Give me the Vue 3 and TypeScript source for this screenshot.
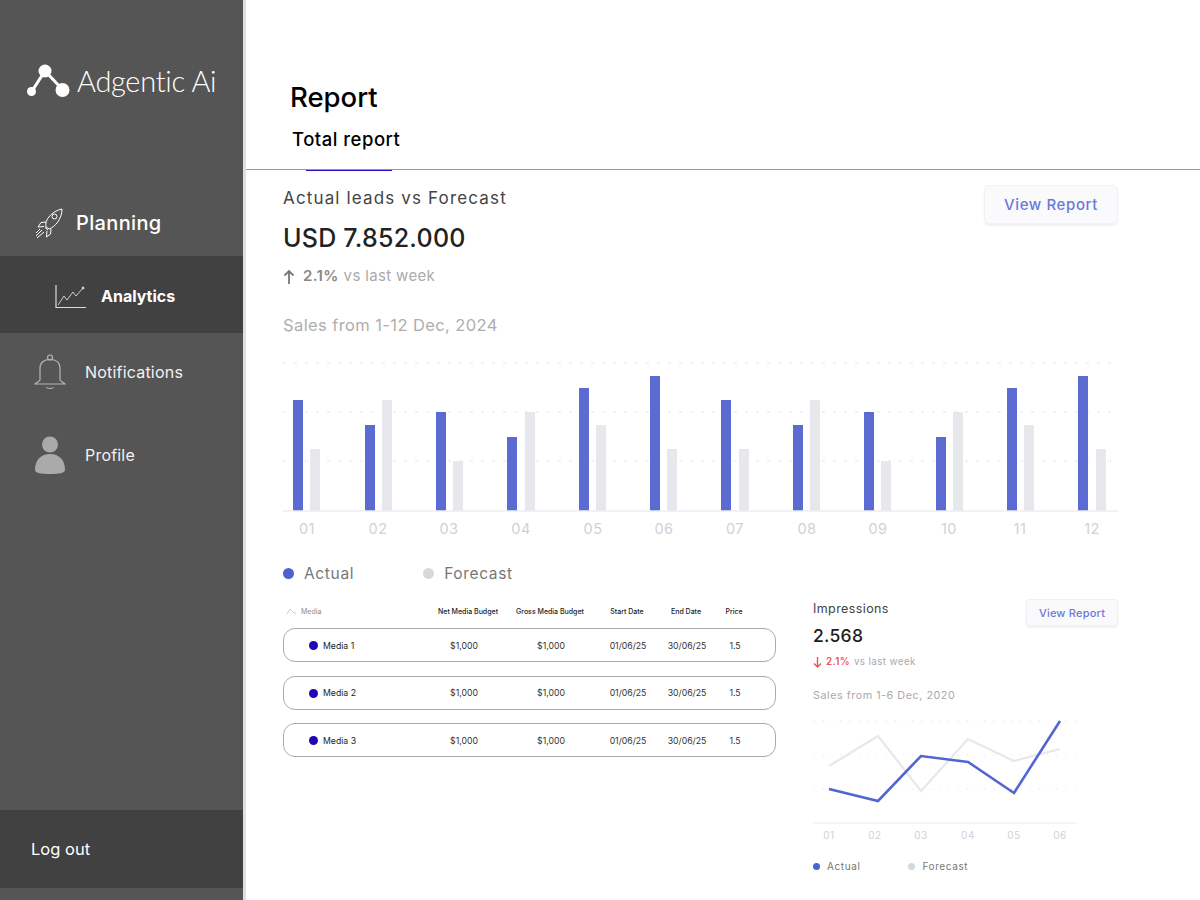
<script setup lang="ts">
const actualTops = [400, 425, 412, 437, 388, 376, 400, 425, 412, 437, 388, 376]
const forecastTops = [449, 400, 461, 412, 425, 449, 449, 400, 461, 412, 425, 449]
const actualX = [293, 365, 436, 507, 579, 650, 721, 793, 864, 936, 1007, 1078]
const forecastX = [310, 382, 453, 525, 596, 667, 739, 810, 881, 953, 1024, 1096]
const labelX = [307, 378, 449, 521, 593, 664, 735, 807, 878, 949, 1020, 1092]
const pad = (n: number) => String(n).padStart(2, '0')

const bars = actualTops.map((top, i) => ({
  label: pad(i + 1),
  ax: actualX[i] - 283,
  ay: top - 355,
  ah: 511 - top,
  fx: forecastX[i] - 283,
  fy: forecastTops[i] - 355,
  fh: 511 - forecastTops[i],
  lx: labelX[i] - 283
}))

const lineX = [16, 62, 108, 155, 201, 247]
const actualLine = '16,74 65,86 108,41 155,47 201,78 247,6'
const forecastLine = '16,51 65,21 108,76 155,24 201,46 247,34'
const rows = ['Media 1', 'Media 2', 'Media 3']
</script>

<template>
  <div class="page">
    <aside class="sidebar">
      <div class="brand">
        <svg class="logo" width="46" height="40" viewBox="0 0 46 40">
          <path d="M8 29 21 9 38 27" fill="none" stroke="#fff" stroke-width="3" />
          <circle cx="21" cy="9" r="6.500" fill="#fff" />
          <circle cx="38.500" cy="28" r="7" fill="#fff" />
          <circle cx="7.500" cy="29.500" r="4.500" fill="#fff" />
        </svg>
        <span class="brand-name">Adgentic Ai</span>
      </div>

      <nav class="nav">
        <a class="nav-item planning">
          <svg class="icon" width="30" height="32" viewBox="0 0 30 32" fill="none" stroke="#fff" stroke-width="1">
            <path d="M12 20C10 13 18 4 28 2c0 10-7 18-13 20z" />
            <circle cx="20.500" cy="9.500" r="2.500" />
            <path d="M12 15 7 15.500 4 20l6-.5M17 22l-.5 5-4 3 .5-6" />
            <path d="M11 20.500 14 23M8 23l-6 6M10 25l-7 6M6 22l-4 4" />
          </svg>
          <span>Planning</span>
        </a>
        <a class="nav-item analytics">
          <svg class="icon" width="32" height="24" viewBox="0 0 32 24" fill="none" stroke="#ddd">
            <path d="M1 0V22.500H31" stroke-width="1.200" />
            <path d="M3 20 9 11 12 15 18 7 21 11 28 3" stroke-width="0.900" />
            <circle cx="28" cy="3" r="1" fill="#ddd" />
          </svg>
          <span class="analytics-label">Analytics</span>
        </a>
        <a class="nav-item notifications">
          <svg class="icon" width="32" height="36" viewBox="0 0 32 36" fill="none" stroke="#b5b5b5" stroke-width="1.200">
            <circle cx="16" cy="3.500" r="2.500" />
            <path d="M6 26V14C6 8.500 10 5.500 16 5.500S26 8.500 26 14V26C26 27 29 28 31 30H1C3 28 6 27 6 26Z" />
            <path d="M12.500 33.500Q16 35.500 19.500 33.500" />
          </svg>
          <span>Notifications</span>
        </a>
        <a class="nav-item profile">
          <svg class="icon" width="32" height="38" viewBox="0 0 32 38">
            <circle cx="16" cy="8.500" r="8" fill="#aaa" />
            <path d="M1 34C1 24 7 18 16 18S31 24 31 34C31 37 25 38 16 38S1 37 1 34Z" fill="#aaa" />
          </svg>
          <span>Profile</span>
        </a>
      </nav>

      <a class="logout">Log out</a>
    </aside>

    <main class="main">
      <header class="head">
        <h1 class="title">Report</h1>
        <div class="tab">Total report</div>
        <span class="tab-line"></span>
      </header>

      <div class="content">
        <section class="summary">
          <div class="summary-text">
            <h2 class="card-title">Actual leads vs Forecast</h2>
            <div class="amount">USD 7.852.000</div>
            <div class="trend">
              <svg width="12" height="15" viewBox="0 0 12 15" fill="none" stroke="#777" stroke-width="1.800">
                <path d="M6 15V2M1.500 6.500 6 2l4.500 4.500" />
              </svg>
              <b>2.1%</b> vs last week
            </div>
            <div class="range">Sales from 1-12 Dec, 2024</div>
          </div>
          <button class="report-btn" type="button">View Report</button>
        </section>

        <svg class="bar-chart" width="835" height="190" viewBox="0 0 835 190">
          <path
            d="M0 8H835M0 57H835M0 106H835"
            stroke="#eceef2"
            stroke-width="1.500"
            stroke-dasharray="3 8"
          />
          <g v-for="b in bars" :key="b.label">
            <rect :x="b.ax" :y="b.ay" width="10" :height="b.ah" fill="#5c6bd1" />
            <rect :x="b.fx" :y="b.fy" width="10" :height="b.fh" fill="#e7e8ec" />
            <text :x="b.lx" y="179" text-anchor="middle" class="tick">{{ b.label }}</text>
          </g>
          <path d="M0 156H835" stroke="#eceef2" stroke-width="1.500" />
        </svg>

        <div class="legend big">
          <span class="legend-item"><i class="dot blue"></i>Actual</span>
          <span class="legend-item"><i class="dot grey"></i>Forecast</span>
        </div>

        <section class="lower">
          <div class="table">
            <div class="grid thead">
              <span class="media-head">
                <svg width="11" height="8" viewBox="0 0 11 8" fill="none" stroke="#ccc">
                  <path d="M1 7 4 2 8 6 10 6" />
                </svg>
                Media
              </span>
              <span>Net Media Budget</span>
              <span>Gross Media Budget</span>
              <span>Start Date</span>
              <span>End Date</span>
              <span>Price</span>
            </div>
            <div v-for="row in rows" :key="row" class="grid row">
              <span class="media-cell"><i class="media-dot"></i>{{ row }}</span>
              <span class="shift">$1,000</span>
              <span>$1,000</span>
              <span>01/06/25</span>
              <span>30/06/25</span>
              <span>1.5</span>
            </div>
          </div>

          <div class="side">
            <div class="side-top">
              <div>
                <h3 class="side-title">Impressions</h3>
                <div class="side-amount">2.568</div>
                <div class="side-trend">
                  <svg width="9" height="11" viewBox="0 0 9 11" fill="none" stroke="#f0525c" stroke-width="1.400">
                    <path d="M4.500 0V10M1 6.500 4.500 10 8 6.500" />
                  </svg>
                  <b>2.1%</b> vs last week
                </div>
              </div>
              <button class="report-btn small" type="button">View Report</button>
            </div>
            <div class="side-range">Sales from 1-6 Dec, 2020</div>
            <svg class="line-chart" width="263" height="130" viewBox="0 0 263 130">
              <path d="M0 6H263M0 40H263M0 74H263" stroke="#eceef2" stroke-width="1" stroke-dasharray="2 7" />
              <path d="M0 108H263" stroke="#e8e9ee" stroke-width="1" />
              <polyline :points="forecastLine" fill="none" stroke="#e7e8ec" stroke-width="2.200" />
              <polyline :points="actualLine" fill="none" stroke="#5166d0" stroke-width="2.600" />
              <text v-for="(x, i) in lineX" :key="x" :x="x" y="124" text-anchor="middle" class="tick small-tick">{{ pad(i + 1) }}</text>
            </svg>
            <div class="legend little">
              <span class="legend-item"><i class="dot blue"></i>Actual</span>
              <span class="legend-item"><i class="dot grey"></i>Forecast</span>
            </div>
          </div>
        </section>
      </div>
    </main>
  </div>
</template>

<style>
html,
body {
  margin: 0;
  background: #fff;
}
</style>

<style scoped>
.page {
  display: flex;
  width: 1200px;
  height: 900px;
  overflow: hidden;
  font-family: Inter, "Noto Sans", sans-serif;
  color: #111;
  background: #fff;
}

.sidebar {
  box-sizing: content-box;
  flex: 0 0 243px;
  display: flex;
  flex-direction: column;
  background: #555;
  border-right: 3px solid #dfe0e3;
  color: #fff;
}

.brand {
  display: flex;
  align-items: center;
  height: 190px;
  padding: 0 0 30px 24px;
  box-sizing: border-box;
  gap: 7px;
}

.logo {
  margin-top: 3px;
}

.brand-name {
  font-family: Lato, sans-serif;
  font-weight: 300;
  font-size: 29px;
  letter-spacing: -0.3px;
  white-space: nowrap;
}

.nav {
  display: flex;
  flex-direction: column;
}

.nav-item {
  display: flex;
  align-items: center;
}

.planning {
  height: 66px;
  padding-left: 34px;
  gap: 12px;
  font-size: 20px;
  font-weight: 500;
  letter-spacing: 0.35px;
}

.analytics {
  box-sizing: border-box;
  height: 77px;
  padding: 4px 0 0 55px;
  gap: 14px;
  background: #414141;
  font-size: 16px;
  font-weight: 700;
}

.analytics-label {
  margin-bottom: 2px;
}

.notifications,
.profile {
  padding-left: 34px;
  gap: 19px;
  font-size: 16px;
  letter-spacing: 0.2px;
  color: #f2f2f2;
}

.notifications {
  height: 78px;
}

.profile {
  height: 87px;
}

.logout {
  display: flex;
  align-items: center;
  margin-top: auto;
  margin-bottom: 12px;
  height: 78px;
  padding-left: 31px;
  background: #414141;
  font-size: 16.500px;
}

.main {
  flex: 1;
  min-width: 0;
}

.head {
  position: relative;
  box-sizing: border-box;
  height: 170px;
  padding: 80px 0 0 44px;
  border-bottom: 1px solid #999;
}

.title {
  margin: 0;
  font-size: 27.500px;
  line-height: 34px;
  font-weight: 500;
  color: #000;
}

.tab {
  margin: 13px 0 0 2px;
  font-size: 18.500px;
  line-height: 24px;
  font-weight: 500;
  letter-spacing: 0.5px;
  color: #000;
}

.tab-line {
  position: absolute;
  left: 60px;
  bottom: -2px;
  width: 86px;
  height: 1.500px;
  background: #2410c8;
}

.content {
  padding: 0 82px 0 37px;
}

.summary {
  display: flex;
  justify-content: space-between;
  align-items: flex-start;
}

.summary-text {
  padding-top: 17px;
}

.card-title {
  margin: 0;
  font-size: 17px;
  line-height: 22px;
  font-weight: 400;
  letter-spacing: 1.15px;
  color: #444;
}

.amount {
  margin-top: 13px;
  font-size: 25px;
  line-height: 32px;
  font-weight: 500;
  letter-spacing: 0.25px;
  color: #222;
}

.trend {
  display: flex;
  align-items: center;
  gap: 5px;
  margin-top: 12px;
  font-size: 15px;
  line-height: 20px;
  letter-spacing: 0.35px;
  color: #aaa;
}

.trend b {
  margin-left: 3px;
  font-weight: 600;
  color: #888;
}

.range {
  margin-top: 28px;
  font-size: 16.500px;
  line-height: 22px;
  letter-spacing: 0.4px;
  color: #aeaeae;
}

.report-btn {
  margin-top: 15px;
  width: 134px;
  height: 39px;
  border: 1px solid #f0f1f4;
  border-radius: 5px;
  background: #fafafc;
  box-shadow: 0 2px 2px #f1f2f5;
  font-family: inherit;
  font-size: 15px;
  font-weight: 500;
  letter-spacing: 0.6px;
  color: #6a79d8;
}

.report-btn.small {
  margin-top: 0;
  width: 92px;
  height: 27px;
  font-size: 11px;
  letter-spacing: 0.2px;
  border-radius: 3px;
}

.bar-chart {
  display: block;
  margin-top: 19px;
}

.tick {
  font-size: 14.500px;
  letter-spacing: 0.5px;
  fill: #cfd1d8;
}

.small-tick {
  font-size: 10px;
}

.legend {
  display: flex;
  align-items: center;
}

.legend-item {
  display: flex;
  align-items: center;
}

.dot {
  display: block;
  border-radius: 50%;
}

.blue {
  background: #4f60cf;
}

.grey {
  background: #d7d8dd;
}

.big {
  margin-top: 18px;
  height: 20px;
  gap: 69px;
  font-size: 15.500px;
  letter-spacing: 0.65px;
  color: #777;
}

.big .dot {
  width: 11px;
  height: 11px;
  margin-right: 10px;
}

.lower {
  display: flex;
  justify-content: space-between;
  margin-top: 16px;
}

.table {
  width: 493px;
}

.grid {
  display: grid;
  grid-template-columns: 145px 80px 84px 70px 48px 48px;
  align-items: center;
  text-align: center;
  white-space: nowrap;
}

.thead {
  height: 29px;
  padding-bottom: 5px;
  box-sizing: border-box;
  font-size: 7px;
  font-weight: 500;
  color: #222;
}

.media-head {
  display: flex;
  align-items: center;
  gap: 4px;
  padding-left: 3px;
  color: #8c8c8c;
  font-weight: 400;
}

.row {
  box-sizing: border-box;
  height: 34px;
  margin-bottom: 13.500px;
  padding-top: 1px;
  border: 1px solid #aaa;
  border-radius: 12px;
  font-size: 8.700px;
  color: #333;
}

.media-cell {
  display: flex;
  align-items: center;
  gap: 5px;
  padding-left: 25px;
  color: #222;
}

.media-dot {
  display: block;
  width: 9px;
  height: 9px;
  border-radius: 50%;
  background: #1f06b5;
}

.shift {
  padding-right: 10px;
}

.side {
  width: 305px;
}

.side-top {
  display: flex;
  justify-content: space-between;
  align-items: flex-start;
  height: 85px;
}

.side-title {
  margin: 0;
  padding-top: 1px;
  font-size: 12.500px;
  line-height: 18px;
  font-weight: 400;
  letter-spacing: 0.4px;
  color: #444;
}

.side-amount {
  margin-top: 6px;
  font-size: 17.500px;
  line-height: 24px;
  font-weight: 500;
  letter-spacing: 0.3px;
  color: #1c1c1c;
}

.side-trend {
  display: flex;
  align-items: center;
  gap: 4px;
  margin-top: 7px;
  font-size: 9.800px;
  line-height: 14px;
  letter-spacing: 0.4px;
  color: #aaa;
}

.side-trend b {
  font-weight: 600;
  color: #f0525c;
}

.side-range {
  margin-top: 4px;
  font-size: 10.800px;
  line-height: 16px;
  letter-spacing: 0.52px;
  color: #aaa;
}

.line-chart {
  display: block;
  margin-top: 11px;
}

.little {
  margin-top: 14px;
  height: 14px;
  gap: 48px;
  font-size: 10px;
  letter-spacing: 0.6px;
  color: #777;
}

.little .dot {
  width: 7px;
  height: 7px;
  margin-right: 7px;
}
</style>
